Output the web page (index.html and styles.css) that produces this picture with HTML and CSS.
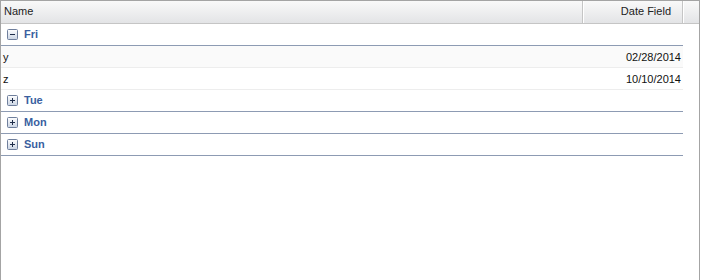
FILE: index.html
```html
<!DOCTYPE html>
<html>
<head>
<meta charset="utf-8">
<link rel="stylesheet" href="styles.css">
</head>
<body>
<div class="panel">
  <div class="header">
    <div class="hcell name">Name</div>
    <div class="hcell date">Date Field</div>
    <div class="hcell filler"></div>
  </div>
  <div class="body">
    <div class="group">
      <span class="tog"><svg width="11" height="11" viewBox="0 0 11 11"><defs><linearGradient id="g1" x1="0" y1="0" x2="0" y2="1"><stop offset="0" stop-color="#ffffff"/><stop offset="1" stop-color="#c9d3e3"/></linearGradient></defs><rect x="0.5" y="0.5" width="10" height="10" rx="1" fill="url(#g1)" stroke="#6f7f9c"/><path d="M3 5.5h5" stroke="#1f2d4a" stroke-width="1"/></svg></span>
      <span class="gtitle">Fri</span>
    </div>
    <div class="row alt"><span class="c-name">y</span><span class="c-date">02/28/2014</span></div>
    <div class="row"><span class="c-name">z</span><span class="c-date">10/10/2014</span></div>
    <div class="group">
      <span class="tog"><svg width="11" height="11" viewBox="0 0 11 11"><rect x="0.5" y="0.5" width="10" height="10" rx="1" fill="url(#g1)" stroke="#6f7f9c"/><path d="M3 5.5h5M5.5 3v5" stroke="#1f2d4a" stroke-width="1"/></svg></span>
      <span class="gtitle">Tue</span>
    </div>
    <div class="group">
      <span class="tog"><svg width="11" height="11" viewBox="0 0 11 11"><rect x="0.5" y="0.5" width="10" height="10" rx="1" fill="url(#g1)" stroke="#6f7f9c"/><path d="M3 5.5h5M5.5 3v5" stroke="#1f2d4a" stroke-width="1"/></svg></span>
      <span class="gtitle">Mon</span>
    </div>
    <div class="group">
      <span class="tog"><svg width="11" height="11" viewBox="0 0 11 11"><rect x="0.5" y="0.5" width="10" height="10" rx="1" fill="url(#g1)" stroke="#6f7f9c"/><path d="M3 5.5h5M5.5 3v5" stroke="#1f2d4a" stroke-width="1"/></svg></span>
      <span class="gtitle">Sun</span>
    </div>
  </div>
</div>
</body>
</html>
```
FILE: styles.css
```css
html, body {
  margin: 0;
  padding: 0;
  background: #fff;
}
body {
  font-family: "Liberation Sans", Arial, sans-serif;
  font-size: 11px;
  color: #000;
}
.panel {
  width: 700px;
  height: 280px;
  box-sizing: border-box;
  border: 1px solid #a4a4a4;
  border-bottom: none;
  display: flex;
  flex-direction: column;
}
.header {
  display: flex;
  height: 23px;
  box-sizing: border-box;
  border-bottom: 1px solid #c5c5c5;
  background: linear-gradient(#f9f9f9, #e3e4e6);
}
.hcell {
  box-sizing: border-box;
  height: 22px;
  line-height: 21px;
  padding: 0 3px;
  color: #222;
  border-right: 1px solid #c5c5c5;
  box-shadow: inset 1px 0 0 #fff;
}
.hcell.name {
  width: 582px;
  box-shadow: none;
}
.hcell.date {
  width: 100px;
  text-align: right;
  padding-right: 11px;
}
.hcell.filler {
  flex: 1;
  border-right: none;
}
.body {
  width: 682px;
  display: flex;
  flex-direction: column;
}
.group {
  height: 22px;
  box-sizing: border-box;
  border-bottom: 1px solid #8d9bb3;
  display: flex;
  align-items: center;
  padding: 0 0 2px 6px;
  gap: 6px;
}
.tog {
  display: flex;
  width: 11px;
  height: 11px;
  margin-top: 1px;
}
.gtitle {
  font-weight: bold;
  color: #3a5f9f;
}
.row {
  height: 22px;
  box-sizing: border-box;
  border-bottom: 1px solid #ededed;
  display: flex;
  align-items: center;
  justify-content: space-between;
  padding: 0 2px 0 2px;
  color: #111;
}
.row.alt {
  background: #fafafa;
}
```
